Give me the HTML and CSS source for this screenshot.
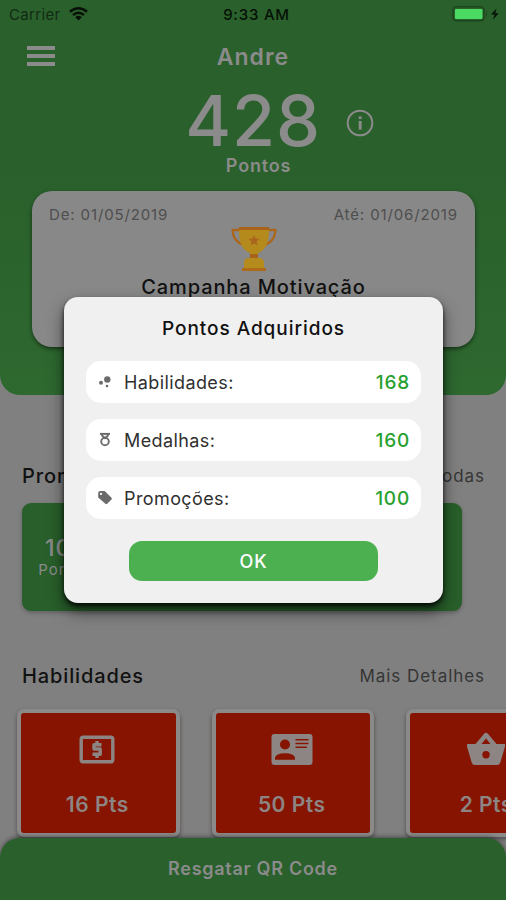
FILE: index.html
```
<!DOCTYPE html>
<html lang="pt-BR">
<head>
<meta charset="utf-8">
<title>Pontos</title>
<link rel="stylesheet" href="styles.css">
</head>
<body>
<div class="app">
  <header class="hero">
    <div class="status">
      <div class="status-left"><span class="carrier">Carrier</span>
        <svg width="19" height="14" viewBox="0 0 19 14" fill="none" stroke="#061006" stroke-width="2.4"><path d="M1 4.7Q9.5-2.2 18 4.7M4 8Q9.5 3.5 15 8"/><path d="M6.3 10.2Q9.5 7.5 12.7 10.2L9.5 13.4Z" fill="#061006" stroke="none"/></svg>
      </div>
      <span class="time">9:33 AM</span>
      <svg class="battery" width="50" height="16" viewBox="0 0 50 16"><rect x="1" y=".8" width="31" height="14" rx="3.5" fill="#2a602b" stroke="#1d451e" stroke-width="1.5"/><rect x="3" y="3" width="27.5" height="10" rx="1.2" fill="#4cdb62"/><path d="M34 5q2 3 0 6z" fill="#1d451e"/><path d="M44.5 2.5 39 8.5h3.6L41 13.5l5.800-6.300h-3.500z" fill="#071207"/></svg>
    </div>
    <div class="bar">
      <span class="menu"><i></i><i></i><i></i></span>
      <h1>Andre</h1>
    </div>
    <div class="score">
      <span class="points">428</span>
      <svg class="info" width="28" height="28" viewBox="0 0 28 28"><circle cx="14" cy="14" r="12.300" fill="none" stroke="#8b8b8b" stroke-width="2"/><rect x="12.700" y="12" width="2.900" height="8.700" fill="#8b8b8b"/><rect x="12.700" y="7.400" width="2.900" height="2.700" fill="#8b8b8b"/></svg>
    </div>
    <p class="points-label">Pontos</p>
    <section class="campaign">
      <div class="dates"><span>De: 01/05/2019</span><span class="until">Até: 01/06/2019</span></div>
      <svg class="trophy" width="46" height="46" viewBox="0 0 46 46"><path d="M9 4H1.700Q1.500 16 15 20M37 4h7.300Q44.500 16 31 20" fill="none" stroke="#ab661c" stroke-width="2.300"/><path d="M8 1h30v4q0 18-11 22v5h-8v-5Q8 23 8 5Z" fill="#b58a1d"/><path d="M8 1h30v3H8zM19 28h8v4h-8z" fill="#a96219"/><path d="M13 42v-5q0-5 5-5h10q5 0 5 5v5z" fill="#b68b1d"/><path d="M11 42h24v3H11z" fill="#ae6c1b"/><path d="m23 9 1.500 3.500 4 .3-3 2.600 1 4-3.500-2.100-3.500 2.100 1-4-3-2.600 4-.3z" fill="#aa651c"/></svg>
      <h2>Campanha Motivação</h2>
    </section>
  </header>

  <main>
    <div class="section-head promo-head"><h3>Promoções</h3><span>Ver Todas</span></div>
    <div class="promo"><div><strong>100</strong><span>Pontos</span></div></div>
    <div class="section-head skill-head"><h3>Habilidades</h3><span class="details">Mais Detalhes</span></div>
    <div class="skills">
      <article class="skill">
        <svg width="46" height="40" viewBox="0 0 46 40"><rect x="7.200" y="7.200" width="31.600" height="24.600" rx="2" fill="none" stroke="#8c8583" stroke-width="3.400"/><path d="M27.500 14.700h-7.500v4.300h6.200v5.200H18.500M23 11v4M23 24v4" fill="none" stroke="#8c8583" stroke-width="3.400" stroke-linejoin="round"/></svg>
        <b>16 Pts</b>
      </article>
      <article class="skill">
        <svg width="46" height="40" viewBox="0 0 46 40"><rect x="2.500" y="4" width="41" height="31" rx="3" fill="#8c8583"/><circle cx="16" cy="14.500" r="5" fill="#861400"/><path d="M6 29.700v-2q1-4.500 10-4.500t10 4.500v2zM26.500 9h13v1.600h-13zM26.500 12.700h13v1.600h-13zM26.500 16.400h11.500V18H26.500z" fill="#861400"/></svg>
        <b>50 Pts</b>
      </article>
      <article class="skill">
        <svg width="46" height="40" viewBox="0 0 46 40"><path fill="#8c8583" fill-rule="evenodd" d="M4 14h8.500L21.300 3.500q1.700-1.700 3.400 0L33.500 14H42v2.500l-4.700 16q-.7 2.500-3.200 2.500H11.900q-2.500 0-3.200-2.500L4 16.500zm14.500 0h9L23 8.600zM23 21a3.700 3.700 0 1 0 0 7.400 3.700 3.700 0 0 0 0-7.400"/></svg>
        <b class="last">2 Pts</b>
      </article>
    </div>
  </main>
  <footer><span>Resgatar QR Code</span></footer>

  <div class="modal">
    <h2>Pontos Adquiridos</h2>
    <div class="row">
      <svg width="16" height="16" viewBox="0 0 16 16" fill="#6b6b6b"><circle cx="10.300" cy="5.500" r="3.200"/><circle cx="4" cy="8.700" r="2"/><circle cx="10" cy="12" r="1.300"/></svg>
      <span class="l1">Habilidades:</span><b>168</b>
    </div>
    <div class="row">
      <svg width="16" height="16" viewBox="0 0 16 16" fill="none" stroke="#6b6b6b"><path d="M3 1.900h10" stroke-width="2"/><path d="m4.500 3 3.500 3.200L11.500 3" stroke-width="1.800"/><circle cx="8" cy="9.500" r="3.800" stroke-width="1.900"/></svg>
      <span class="l2">Medalhas:</span><b>160</b>
    </div>
    <div class="row">
      <svg width="16" height="16" viewBox="0 0 16 16"><path fill="#6b6b6b" fill-rule="evenodd" d="M1.200 3q0-2 2-2h4.500l6.800 6.700q.8.900 0 1.800l-4.300 4.300q-.9.800-1.800 0L1.200 7.500zM4 2.800a1.100 1.100 0 1 0 0 2.200 1.100 1.100 0 0 0 0-2.200"/></svg>
      <span class="l3">Promoções:</span><b>100</b>
    </div>
    <button>OK</button>
  </div>
</div>
</body>
</html>
```
FILE: styles.css
```
* { box-sizing: border-box; }
body { margin: 0; font-family: Inter, "Open Sans", sans-serif; }
h1, h2, h3, p { margin: 0; }
svg { display: block; flex: none; }
.app { position: relative; width: 506px; height: 900px; overflow: hidden; display: flex; flex-direction: column; background: #808080; }

.hero { height: 395px; flex: none; border-radius: 0 0 20px 20px; background: linear-gradient(#2a602b 0, #2a602b 170px, #2e6930 100%); }
.status { height: 28px; display: grid; grid-template-columns: 1fr auto 1fr; align-items: center; padding: 0 4px 0 9px; color: #061006; }
.status-left { display: flex; align-items: center; gap: 8px; }
.carrier { font-size: 15px; letter-spacing: .35px; color: #122b13; }
.time { font-size: 15px; font-weight: 500; letter-spacing: .8px; margin-left: 2px; }
.battery { justify-self: end; }
.bar { height: 58px; display: grid; grid-template-columns: 1fr auto 1fr; align-items: center; padding: 0 27px; }
.menu { width: 28px; height: 20px; display: flex; flex-direction: column; justify-content: space-between; margin-top: -3px; }
.menu i { height: 4px; background: #8b8b8b; }
h1 { font-size: 23px; line-height: 28px; font-weight: 600; letter-spacing: 1px; color: #8b8b8b; }
.score { height: 70px; display: grid; grid-template-columns: 1fr auto 1fr; align-items: center; }
.points { grid-column: 2; font-size: 70px; line-height: 70px; letter-spacing: .8px; font-weight: 500; color: #8b8b8b; }
.info { margin: 4px 0 0 25px; }
.points-label { height: 35px; padding: 0 0 0 11px; text-align: center; font-size: 18px; line-height: 19px; font-weight: 600; letter-spacing: .8px; color: #8b8b8b; }
.campaign { height: 156px; margin: 0 31px 0 32px; padding: 15px 17px 0 17px; border-radius: 20px; background: #888; box-shadow: 0 2px 4px rgba(0,0,0,.5); display: flex; flex-direction: column; align-items: center; }
.dates { align-self: stretch; display: flex; justify-content: space-between; font-size: 15px; line-height: 18px; letter-spacing: .87px; color: #4e4e4e; }
.trophy { margin-top: 2px; }
.campaign h2 { font-size: 20px; line-height: 26px; font-weight: 500; letter-spacing: .88px; margin-top: 2px; color: #111; white-space: nowrap; }

main { padding: 0 22px; }
.section-head { display: flex; justify-content: space-between; align-items: center; height: 28px; }
.section-head h3 { font-size: 20px; font-weight: 500; letter-spacing: .88px; color: #111; }
.section-head span { font-size: 17px; letter-spacing: .95px; margin-right: -1px; color: #353535; }
.promo-head { margin-top: 67px; }
.promo { width: 440px; height: 108px; margin-top: 13px; border-radius: 9px; background: #285f2a; box-shadow: 0 2px 4px rgba(0,0,0,.25); color: #8b8b8b; padding: 32px 16px; }
.promo div { display: flex; flex-direction: column; align-items: center; width: 56px; }
.promo strong { font-size: 23px; line-height: 27px; font-weight: 500; letter-spacing: 1px; }
.promo span { font-size: 15px; line-height: 16px; letter-spacing: 1.100px; }
.skill-head { margin-top: 51px; }
.skills { display: flex; gap: 32px; margin: 19px 0 0 -5px; }
.skill { flex: none; width: 162.500px; height: 128px; border: 4px solid #8c8989; border-radius: 7px; background: #861400; box-shadow: 0 2px 4px rgba(0,0,0,.4); padding: 17px 2px 0 0; display: flex; flex-direction: column; align-items: center; color: #8c8583; }
.skill b { margin-top: 21px; font-size: 21px; line-height: 28px; font-weight: 600; letter-spacing: .5px; }
footer { position: absolute; left: 0; right: 0; bottom: 0; height: 62px; border-radius: 20px 20px 0 0; background: #2a602b; box-shadow: 0 -1px 5px rgba(0,0,0,.45); color: #8b8b8b; text-align: center; font-size: 18px; line-height: 62px; font-weight: 600; letter-spacing: .72px; }

.modal { position: absolute; left: 64px; top: 297px; width: 379px; height: 306px; padding: 20px 22px 22px; border-radius: 14px; background: #f0f0f0; box-shadow: 0 3px 4px rgba(0,0,0,.75), 0 8px 16px rgba(0,0,0,.55); display: flex; flex-direction: column; }
.modal h2 { font-size: 19px; line-height: 24px; font-weight: 500; letter-spacing: .95px; color: #111; text-align: center; margin-bottom: 20px; white-space: nowrap; }
.row { height: 42px; margin-bottom: 16px; padding: 0 11px 0 11px; border-radius: 15px; background: #fff; display: flex; align-items: center; }
.row span { margin-left: 11px; font-size: 18px; letter-spacing: .4px; color: #303030; }
.row b { margin-left: auto; font-size: 19px; font-weight: 500; letter-spacing: .8px; color: #27a12f; }
.modal button { width: 249px; height: 40px; margin: 6px 0 0 43px; border: 0; padding: 0; border-radius: 13px; background: #4caf50; color: #fff; font: 500 18px Inter, sans-serif; letter-spacing: .8px; }
```
